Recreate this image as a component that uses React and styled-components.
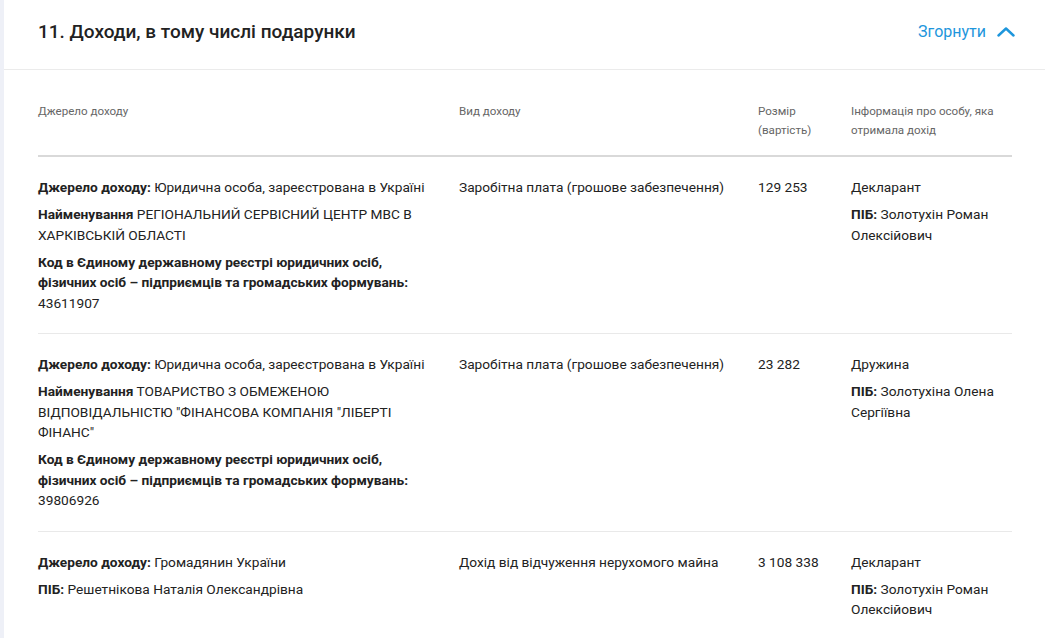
import React from 'react';
import styled, { createGlobalStyle } from 'styled-components';

const GlobalStyle = createGlobalStyle`
  html, body {
    margin: 0;
    padding: 0;
    background: #eef0f7;
    font-family: Roboto, "Noto Sans", "Liberation Sans", sans-serif;
    color: #222;
    overflow: hidden;
  }
  * { box-sizing: border-box; }
`;

const Card = styled.section`
  margin-left: 4px;
  background: #fff;
  min-height: 638px;
`;

const CardHeader = styled.header`
  height: 70px;
  display: flex;
  align-items: center;
  justify-content: space-between;
  padding: 0 30px 6px 34px;
  border-bottom: 1px solid #ebebeb;
`;

const Title = styled.h2`
  margin: 0;
  font-size: 19px;
  font-weight: 500;
  color: #222;
`;

const Toggle = styled.button`
  display: flex;
  align-items: center;
  gap: 11px;
  background: none;
  border: none;
  padding: 0;
  cursor: pointer;
  font-family: inherit;
  font-size: 16px;
  color: #1e96dc;
`;

const Table = styled.div`
  padding: 0 33px 0 34px;
`;

const Row = styled.div`
  display: grid;
  grid-template-columns: 421px 299px 93px 1fr;
  padding: ${p => (p.$head ? '32px 0 15px' : '20px 0')};
  border-bottom: ${p => (p.$head ? '2px solid #d9d9d9' : '1px solid #e9e9e9')};
`;

const HeadCell = styled.div`
  font-size: 11.6px;
  line-height: 19px;
  color: #666;
  padding-right: 14px;
`;

const Cell = styled.div`
  font-size: 13.7px;
  line-height: 20.5px;
  color: #222;
  padding-right: ${p => p.$pr ?? 20}px;
`;

const Field = styled.div`
  & + & {
    margin-top: 6.5px;
  }
  b {
    font-weight: 700;
  }
`;

const rows = [
  {
    source: [
      ['Джерело доходу:', 'Юридична особа, зареєстрована в Україні'],
      ['Найменування', 'РЕГІОНАЛЬНИЙ СЕРВІСНИЙ ЦЕНТР МВС В ХАРКІВСЬКІЙ ОБЛАСТІ'],
      ['Код в Єдиному державному реєстрі юридичних осіб, фізичних осіб – підприємців та громадських формувань:', '43611907', true],
    ],
    kind: 'Заробітна плата (грошове забезпечення)',
    amount: '129 253',
    who: 'Декларант',
    name: 'Золотухін Роман Олексійович',
  },
  {
    source: [
      ['Джерело доходу:', 'Юридична особа, зареєстрована в Україні'],
      ['Найменування', 'ТОВАРИСТВО З ОБМЕЖЕНОЮ ВІДПОВІДАЛЬНІСТЮ "ФІНАНСОВА КОМПАНІЯ "ЛІБЕРТІ ФІНАНС"'],
      ['Код в Єдиному державному реєстрі юридичних осіб, фізичних осіб – підприємців та громадських формувань:', '39806926', true],
    ],
    kind: 'Заробітна плата (грошове забезпечення)',
    amount: '23 282',
    who: 'Дружина',
    name: 'Золотухіна Олена Сергіївна',
  },
  {
    source: [
      ['Джерело доходу:', 'Громадянин України'],
      ['ПІБ:', 'Решетнікова Наталія Олександрівна'],
    ],
    kind: 'Дохід від відчуження нерухомого майна',
    amount: '3 108 338',
    who: 'Декларант',
    name: 'Золотухін Роман Олексійович',
  },
];

function ChevronUp() {
  return (
    <svg width="18" height="10" viewBox="0 0 18 10" fill="none">
      <path d="M1.5 8.5L9 1.5L16.5 8.5" stroke="#1e96dc" strokeWidth="2.4" strokeLinecap="round" strokeLinejoin="round" />
    </svg>
  );
}

export default function App() {
  return (
    <>
      <GlobalStyle />
      <Card>
        <CardHeader>
          <Title>11. Доходи, в тому числі подарунки</Title>
          <Toggle type="button">
            Згорнути
            <ChevronUp />
          </Toggle>
        </CardHeader>
        <Table>
          <Row $head>
            <HeadCell>Джерело доходу</HeadCell>
            <HeadCell>Вид доходу</HeadCell>
            <HeadCell>Розмір (вартість)</HeadCell>
            <HeadCell>Інформація про особу, яка отримала дохід</HeadCell>
          </Row>
          {rows.map((r, i) => (
            <Row key={i}>
              <Cell $pr={26}>
                {r.source.map(([label, value, block], j) => (
                  <Field key={j}>
                    <b>{label}</b>
                    {block ? <div>{value}</div> : <> {value}</>}
                  </Field>
                ))}
              </Cell>
              <Cell>{r.kind}</Cell>
              <Cell>{r.amount}</Cell>
              <Cell $pr={0}>
                <Field>{r.who}</Field>
                <Field>
                  <b>ПІБ:</b> {r.name}
                </Field>
              </Cell>
            </Row>
          ))}
        </Table>
      </Card>
    </>
  );
}
